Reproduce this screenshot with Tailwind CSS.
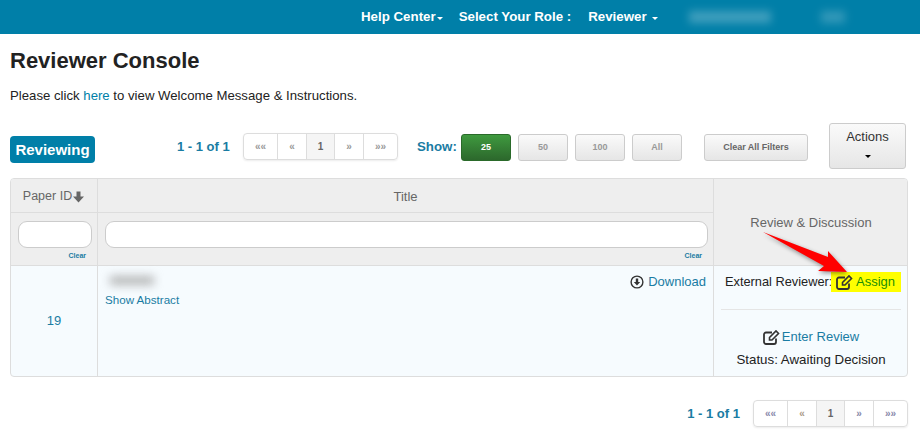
<!DOCTYPE html>
<html lang="en">
  <head>
    <title>Reviewer Console</title>
    <meta charset="utf-8" />
    <script src="https://cdn.jsdelivr.net/npm/@tailwindcss/browser@4"></script>
  </head>
  <body class="relative h-[446px] w-[920px] overflow-hidden bg-white font-['Liberation_Sans',Arial,sans-serif] text-[#333]">
    <!-- top bar -->
    <nav class="flex h-[34px] items-center bg-[#007fa8] text-[13.3px] font-bold text-white">
      <a class="ml-[361px] flex items-center">Help Center<span class="ml-px mt-0.5 border-x-[3px] border-t-[3px] border-x-transparent border-t-white"></span></a>
      <span class="ml-[16px]">Select Your Role :</span>
      <a class="ml-[17px] flex items-center">Reviewer<span class="ml-[5px] mt-0.5 border-x-[3px] border-t-[3px] border-x-transparent border-t-white"></span></a>
      <span class="ml-[31px] h-3 w-[82px] bg-white/25 blur-[4px]"></span>
      <span class="ml-[50px] h-3 w-[24px] bg-white/20 blur-[4px]"></span>
    </nav>

    <main class="px-[10px]">
      <h1 class="mt-[13px] text-[22px] leading-[28px] font-bold text-[#222]">Reviewer Console</h1>
      <p class="mt-[13px] text-[13.2px] leading-[16px] text-[#222]">Please click <a class="text-[#007fa8]">here</a> to view Welcome Message &amp; Instructions.</p>

      <!-- toolbar -->
      <div class="relative mt-[19px] flex h-[46px] items-start">
        <span class="mt-[13px] flex h-[27px] w-[85px] items-center justify-center rounded bg-[#007fa8] pt-px text-[15px] font-bold text-white">Reviewing</span>
        <span class="ml-[82px] mt-[15px] w-[53px] whitespace-nowrap text-[13px] leading-[18px] font-bold text-[#1a7ca3]">1 - 1 of 1</span>
        <div class="ml-[13px] mt-[10px] flex h-[27px] w-[155px] overflow-hidden rounded border border-[#ddd] text-[10px] font-bold text-[#999] shadow-[0_1px_2px_rgba(0,0,0,0.08)]">
          <span class="flex w-[34px] items-center justify-center border-r border-[#ddd]">««</span>
          <span class="flex w-[29px] items-center justify-center border-r border-[#ddd]">«</span>
          <span class="flex w-[28px] items-center justify-center border-r border-[#ddd] bg-[#f5f5f5] text-[#666]">1</span>
          <span class="flex w-[29px] items-center justify-center border-r border-[#ddd]">»</span>
          <span class="flex flex-1 items-center justify-center">»»</span>
        </div>
        <span class="ml-[19px] mt-[15px] w-[39px] text-[13.3px] leading-[18px] font-bold text-[#1a7ca3]">Show:</span>
        <span class="ml-[5px] mt-[11px] flex h-[27px] w-[50px] items-center justify-center rounded-[3px] border border-[#2a6a2a] bg-linear-to-b from-[#3f9a3f] to-[#2c682c] text-[9px] font-bold text-white">25</span>
        <span class="ml-[7px] mt-[11px] flex h-[27px] w-[50px] items-center justify-center rounded-[3px] border border-[#ccc] bg-linear-to-b from-[#fafafa] to-[#e6e6e6] text-[9px] font-bold text-[#999]">50</span>
        <span class="ml-[7px] mt-[11px] flex h-[27px] w-[50px] items-center justify-center rounded-[3px] border border-[#ccc] bg-linear-to-b from-[#fafafa] to-[#e6e6e6] text-[9px] font-bold text-[#999]">100</span>
        <span class="ml-[7px] mt-[11px] flex h-[27px] w-[50px] items-center justify-center rounded-[3px] border border-[#ccc] bg-linear-to-b from-[#fafafa] to-[#e6e6e6] text-[9px] font-bold text-[#999]">All</span>
        <span class="ml-[22px] mt-[11px] flex h-[27px] w-[104px] items-center justify-center rounded-[3px] border border-[#ccc] bg-linear-to-b from-[#fafafa] to-[#e6e6e6] text-[9px] font-bold text-[#666]">Clear All Filters</span>
        <span class="ml-[21px] flex h-[46px] w-[77px] flex-col items-center rounded-[3px] border border-[#ccc] bg-linear-to-b from-[#fafafa] to-[#e6e6e6] pt-[5px] text-[13px] leading-[16px] text-[#333]">Actions<span class="mt-[10px] border-x-[3px] border-t-[3px] border-x-transparent border-t-black"></span></span>
      </div>

      <!-- table -->
      <div class="mt-[9px] grid h-[199px] w-[898px] grid-cols-[87px_616px_1fr] grid-rows-[34px_53px_1fr] overflow-hidden rounded border border-[#ddd] bg-[#f6fbfe] text-[13px]">
        <div class="flex items-center justify-center border-r border-b border-[#ddd] bg-[#eee] pt-[2px] text-[12.5px] text-[#666]">Paper ID<svg class="h-[12px] w-[13px]" viewBox="0 0 12 12"><path fill="#666" d="M4 .5h4v5h3.500L6 11.500 .5 5.500H4z"/></svg></div>
        <div class="flex items-center justify-center border-r border-b border-[#ddd] bg-[#eee] pt-[2px] text-[#666]">Title</div>
        <div class="row-span-2 flex items-center justify-center border-b border-[#ddd] bg-[#eee] pt-[2px] text-[#666]">Review &amp; Discussion</div>

        <div class="border-r border-b border-[#ddd] bg-[#eee] pl-[7px] pr-[5px] pt-[8px]">
          <div class="h-[27px] rounded-[9px] border border-[#ccc] bg-white"></div>
          <div class="mt-[2px] pr-[6px] text-right text-[7px] leading-[12px] font-bold text-[#1a7ca3]">Clear</div>
        </div>
        <div class="border-r border-b border-[#ddd] bg-[#eee] pl-[7px] pr-[5px] pt-[8px]">
          <div class="h-[27px] rounded-[9px] border border-[#ccc] bg-white"></div>
          <div class="mt-[2px] pr-[6px] text-right text-[7px] leading-[12px] font-bold text-[#1a7ca3]">Clear</div>
        </div>

        <div class="flex items-center justify-center border-r border-[#ddd] text-[#1a7ca3]">19</div>
        <div class="relative border-r border-[#ddd] pl-[7px] pt-[27px]">
          <span class="absolute left-[12px] top-[10px] h-[9px] w-[44px] bg-[#999]/70 blur-[5px]"></span>
          <a class="block text-[11.6px] leading-[14px] text-[#1a7ca3]">Show Abstract</a>
          <a class="absolute right-[7px] top-[8px] flex items-center gap-[4px] leading-[16px] text-[#1a7ca3]">
            <svg class="h-[14px] w-[14px]" viewBox="0 0 14 14"><circle cx="7" cy="7" r="5.900" fill="none" stroke="#333" stroke-width="1.400"/><path fill="#333" d="M5.800 3.500h2.400v3.500h2L7 10.500 3.800 7h2z"/></svg>Download</a>
        </div>
        <div class="flex flex-col items-center px-[7px] text-[#222]">
          <div class="mt-[6px] ml-[4px] flex h-[20px] items-center self-start whitespace-nowrap leading-[16px]"><span class="w-[106px] text-[12.8px]">External Reviewer:</span><a class="flex h-[20px] w-[70px] items-center gap-[3px] bg-[#ff0] pl-[5px] text-[#1a8f05]">
            <svg class="h-[16px] w-[17px]" viewBox="0 0 17 16"><path fill="none" stroke="#333" stroke-width="1.800" d="M13 9.500V13a2 2 0 0 1-2 2H3a2 2 0 0 1-2-2V5.500a2 2 0 0 1 2-2h6"/><path fill="none" stroke="#333" stroke-width="1.600" d="M6.500 8.500l6.500-6.500 2.500 2.500-6.500 6.500H6.500z"/></svg>Assign</a></div>
          <div class="mt-[17px] w-full border-t border-[#e5e5e5]"></div>
          <a class="mt-[19px] flex items-center gap-[2px] leading-[16px] text-[#1a7ca3]">
            <svg class="h-[16px] w-[17px]" viewBox="0 0 17 16"><path fill="none" stroke="#333" stroke-width="1.800" d="M13 9.500V13a2 2 0 0 1-2 2H3a2 2 0 0 1-2-2V5.500a2 2 0 0 1 2-2h6"/><path fill="none" stroke="#333" stroke-width="1.600" d="M6.500 8.500l6.500-6.500 2.500 2.500-6.500 6.500H6.500z"/></svg>Enter Review</a>
          <div class="mt-[7px] text-[13.3px] leading-[16px]">Status: Awaiting Decision</div>
        </div>
      </div>

      <!-- bottom pager -->
      <div class="mt-[23px] flex items-center justify-end pr-[2px]">
        <span class="text-[13px] font-bold text-[#1a7ca3]">1 - 1 of 1</span>
        <div class="ml-[13px] flex h-[27px] w-[155px] overflow-hidden rounded border border-[#ddd] text-[10px] font-bold text-[#88a] shadow-[0_1px_2px_rgba(0,0,0,0.08)]">
          <span class="flex w-[34px] items-center justify-center border-r border-[#ddd]">««</span>
          <span class="flex w-[29px] items-center justify-center border-r border-[#ddd] text-[#a98]">«</span>
          <span class="flex w-[28px] items-center justify-center border-r border-[#ddd] bg-[#f5f5f5] text-[#666]">1</span>
          <span class="flex w-[29px] items-center justify-center border-r border-[#ddd]">»</span>
          <span class="flex flex-1 items-center justify-center">»»</span>
        </div>
      </div>
    </main>

    <!-- annotation arrow drawn over the table -->
    <svg class="absolute left-[755px] top-[225px] h-[60px] w-[105px] drop-shadow-[1px_2px_2px_rgba(0,0,0,0.4)]" viewBox="755 225 105 60">
      <path fill="#f00" d="M763 232L828 257V251L847 272 818 271 824 266z"/>
    </svg>
  </body>
</html>
